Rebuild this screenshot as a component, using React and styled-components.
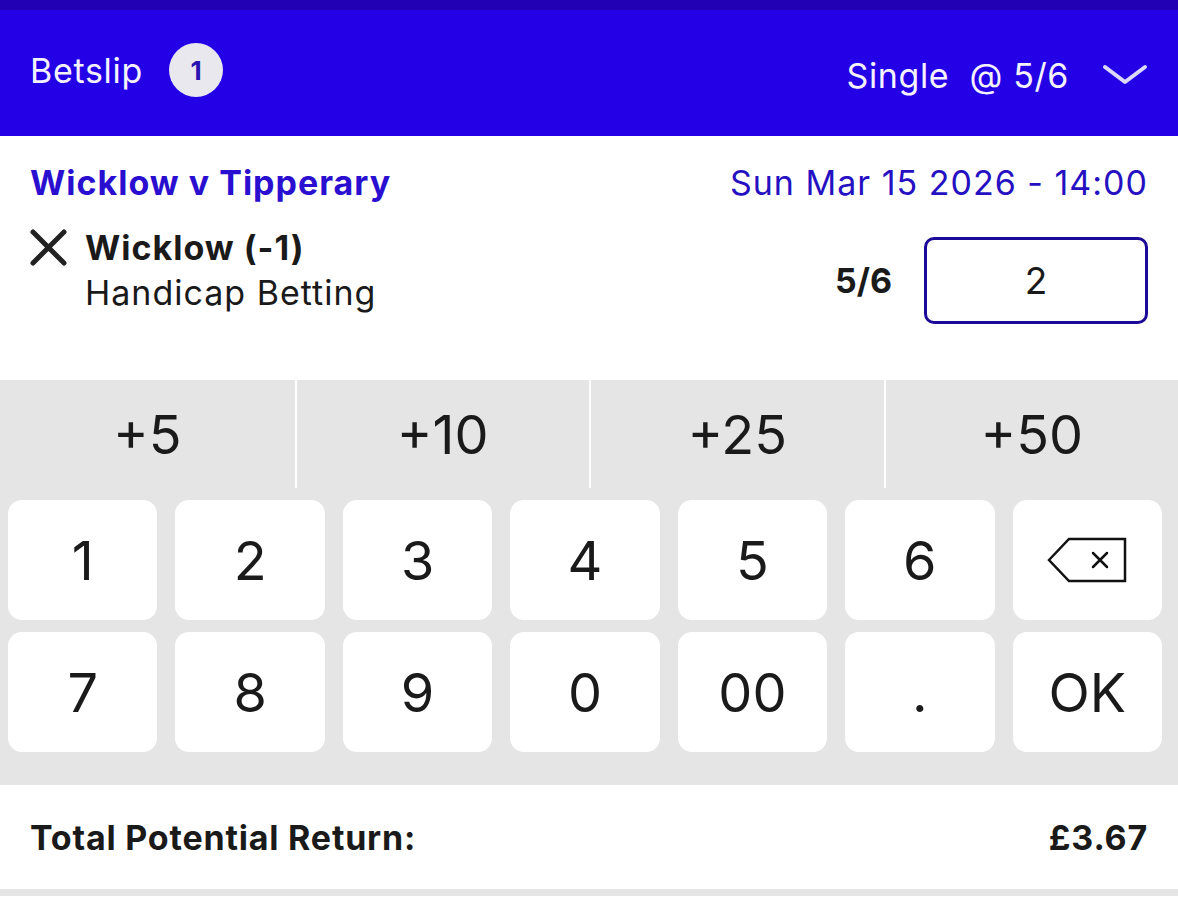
import React from 'react';
import styled, { createGlobalStyle } from 'styled-components';

const GlobalStyle = createGlobalStyle`
    html, body {
        margin: 0;
        padding: 0;
        background: #fff;
    }
    body {
        font-family: Inter, "Noto Sans", "Liberation Sans", sans-serif;
        color: #1a1a1a;
    }
`;

const Page = styled.div`
    width: 1178px;
    min-height: 912px;
    background: #fff;
`;

const Header = styled.div`
    height: 126px;
    border-top: 10px solid #2200b4;
    background: #2300e6;
    display: flex;
    align-items: center;
    justify-content: space-between;
    padding: 0 30px;
    color: #f4f2ff;
`;

const HeaderLeft = styled.div`
    display: flex;
    align-items: center;
    gap: 26px;
    font-size: 34px;
    letter-spacing: 0.7px;
    margin-top: -6px;
`;

const Badge = styled.span`
    width: 54px;
    height: 54px;
    border-radius: 50%;
    background: #e9e8ef;
    color: #2a12b0;
    font-weight: 700;
    font-size: 26px;
    letter-spacing: 0;
    display: flex;
    align-items: center;
    justify-content: center;
`;

const HeaderRight = styled.div`
    display: flex;
    align-items: center;
    gap: 33px;
    font-size: 34px;
    letter-spacing: 0.6px;
    margin-top: 4px;
    white-space: pre;
`;

const Selection = styled.div`
    height: 244px;
    box-sizing: border-box;
    padding: 26px 30px 0 30px;
`;

const EventRow = styled.div`
    display: flex;
    justify-content: space-between;
    align-items: baseline;
    letter-spacing: 1px;
`;

const EventName = styled.div`
    font-size: 34px;
    font-weight: 700;
    color: #2a0fd0;
`;

const EventDate = styled.div`
    font-size: 34px;
    color: #2511c2;
`;

const BetRow = styled.div`
    display: flex;
    justify-content: space-between;
    align-items: flex-start;
    margin-top: 22px;
`;

const BetInfo = styled.div`
    display: flex;
    align-items: flex-start;
    gap: 18px;
`;

const RemoveIcon = styled.svg`
    margin-top: 4px;
    flex: none;
`;

const BetText = styled.div`
    display: flex;
    flex-direction: column;
    font-size: 34px;
    line-height: 45px;
    letter-spacing: 1px;
`;

const BetName = styled.span`
    font-weight: 700;
`;

const StakeArea = styled.div`
    display: flex;
    align-items: center;
    gap: 32px;
    margin-top: 12px;
`;

const Odds = styled.span`
    font-weight: 700;
    font-size: 34px;
`;

const StakeBox = styled.div`
    width: 224px;
    height: 87px;
    box-sizing: border-box;
    border: 3px solid #1c0a98;
    border-radius: 10px;
    display: flex;
    align-items: center;
    justify-content: center;
    font-size: 37px;
`;

const Keyboard = styled.div`
    background: #e5e5e5;
`;

const QuickRow = styled.div`
    display: grid;
    grid-template-columns: repeat(4, 1fr);
    height: 108px;
`;

const QuickButton = styled.div`
    display: flex;
    align-items: center;
    justify-content: center;
    font-size: 54px;
    border-left: ${p => (p.$first ? 'none' : '2px solid #fff')};
`;

const KeyGrid = styled.div`
    display: grid;
    grid-template-columns: repeat(7, 1fr);
    grid-auto-rows: 120px;
    gap: 12px 18px;
    padding: 12px 16px 33px 8px;
`;

const Key = styled.div`
    background: #fff;
    border-radius: 14px;
    display: flex;
    align-items: center;
    justify-content: center;
    font-size: 54px;
    color: #1a1a1a;
`;

const TotalRow = styled.div`
    height: 104px;
    display: flex;
    align-items: center;
    justify-content: space-between;
    padding: 0 30px;
    font-size: 34px;
    font-weight: 700;
    letter-spacing: 0.8px;
    border-bottom: 7px solid #e5e5e5;
`;

const Chevron = () => (
    <svg width="46" height="24" viewBox="0 0 46 24">
        <path d="M3 4 L23 19 L43 4" fill="none" stroke="#dcd8ff" strokeWidth="4" strokeLinecap="round" strokeLinejoin="round" />
    </svg>
);

const Backspace = () => (
    <svg width="80" height="46" viewBox="0 0 80 46">
        <path d="M2 23 L22 2 L78 2 L78 44 L22 44 Z" fill="none" stroke="#111" strokeWidth="2.5" strokeLinejoin="miter" />
        <path d="M46 16 L60 30 M60 16 L46 30" stroke="#111" strokeWidth="2.5" strokeLinecap="round" />
    </svg>
);

const quick = ['+5', '+10', '+25', '+50'];
const keys = ['1', '2', '3', '4', '5', '6', 'back', '7', '8', '9', '0', '00', '.', 'OK'];

export default function App() {
    return (
        <Page>
            <GlobalStyle />
            <Header>
                <HeaderLeft>
                    <span>Betslip</span>
                    <Badge>1</Badge>
                </HeaderLeft>
                <HeaderRight>
                    <span>Single  @ 5/6</span>
                    <Chevron />
                </HeaderRight>
            </Header>
            <Selection>
                <EventRow>
                    <EventName>Wicklow v Tipperary</EventName>
                    <EventDate>Sun Mar 15 2026 - 14:00</EventDate>
                </EventRow>
                <BetRow>
                    <BetInfo>
                        <RemoveIcon width="37" height="37" viewBox="0 0 37 37">
                            <path d="M3 3 L34 34 M34 3 L3 34" stroke="#222" strokeWidth="5" strokeLinecap="round" />
                        </RemoveIcon>
                        <BetText>
                            <BetName>Wicklow (-1)</BetName>
                            <span>Handicap Betting</span>
                        </BetText>
                    </BetInfo>
                    <StakeArea>
                        <Odds>5/6</Odds>
                        <StakeBox>2</StakeBox>
                    </StakeArea>
                </BetRow>
            </Selection>
            <Keyboard>
                <QuickRow>
                    {quick.map((q, i) => (
                        <QuickButton key={q} $first={i === 0}>{q}</QuickButton>
                    ))}
                </QuickRow>
                <KeyGrid>
                    {keys.map(k => (
                        <Key key={k}>{k === 'back' ? <Backspace /> : k}</Key>
                    ))}
                </KeyGrid>
            </Keyboard>
            <TotalRow>
                <span>Total Potential Return:</span>
                <span>£3.67</span>
            </TotalRow>
        </Page>
    );
}
